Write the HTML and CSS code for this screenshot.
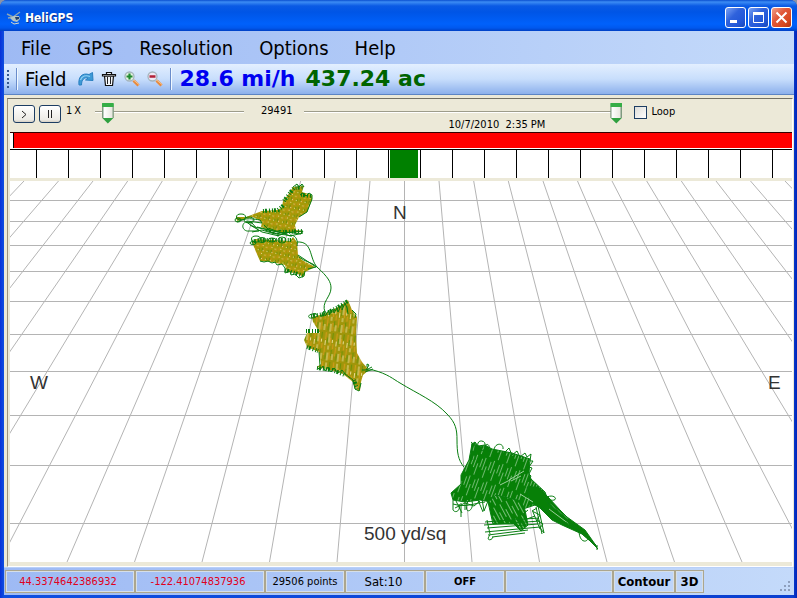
FILE: index.html
```html
<!DOCTYPE html>
<html lang="en">
<head>
<meta charset="utf-8">
<meta name="viewport" content="width=device-width, initial-scale=1">
<title>HeliGPS</title>
<link rel="stylesheet" href="styles.css">
</head>
<body>
<div class="window">
  <header class="titlebar">
    <svg class="app-icon" width="16" height="16" viewBox="0 0 16 16" aria-hidden="true">
      <path d="M1 4l6 3 7-5M2 8l5-1" stroke="#8aa4b4" stroke-width="1.4" fill="none"/>
      <path d="M4 8l4-2 5 0 1 3-3 3-4-1z" fill="#b4c4c4"/>
      <path d="M9 7l4 0 0 2-3 1z" fill="#23406c"/>
      <path d="M5 12l3 2 5-1" stroke="#d8d8c8" fill="none"/>
    </svg>
    <h1>HeliGPS</h1>
    <div class="caption-buttons">
      <button type="button" class="caption" aria-label="Minimize"><svg width="19" height="19" viewBox="0 0 19 19"><path d="M4 12h7v3H4z" fill="#fff"/></svg></button>
      <button type="button" class="caption" aria-label="Maximize"><svg width="19" height="19" viewBox="0 0 19 19"><path d="M4.500 4.500h10v10h-10z" fill="none" stroke="#fff"/><path d="M4 4h11v3H4z" fill="#fff"/></svg></button>
      <button type="button" class="caption close" aria-label="Close"><svg width="19" height="19" viewBox="0 0 19 19"><path d="M4.500 4.500l10 10M14.500 4.500l-10 10" stroke="#fff" stroke-width="2"/></svg></button>
    </div>
  </header>

  <div class="client">
    <nav class="menu">
      <button type="button">File</button>
      <button type="button">GPS</button>
      <button type="button">Resolution</button>
      <button type="button">Options</button>
      <button type="button">Help</button>
    </nav>

    <div class="toolbar">
      <span class="grip"></span>
      <span class="separator"></span>
      <button type="button" class="field">Field</button>
      <div class="tools">
        <button type="button" aria-label="Redo"><svg width="16" height="16" viewBox="0 0 16 16"><path d="M1 14C0 6 4 1.500 11 3.500L14.500 1.500 15 9.500 7.500 9 10 7C6.500 6 3.500 8.500 3.500 14z" fill="#3d9ad6" stroke="#2a7fc0"/><path d="M2.500 9C4 5 8 4 12 5.500" stroke="#8fd0f4" fill="none" stroke-width="1.300"/></svg></button>
        <button type="button" aria-label="Delete"><svg width="16" height="16" viewBox="0 0 16 16"><path d="M3.500 5h9l-1 9.500h-7z" fill="#f4f6fa" stroke="#111" stroke-width="1.200"/><path d="M1.500 3.500h13v1.500h-13zM5.500 3V1.500h5V3" stroke="#111" stroke-width="1.200" fill="#f4f6fa"/><path d="M6.500 6v7M9.500 6v7" stroke="#222"/></svg></button>
        <button type="button" aria-label="Zoom in"><svg width="16" height="16" viewBox="0 0 16 16"><path d="M9.500 9.500l5 5" stroke="#e88a3c" stroke-width="3"/><path d="M9 8.500l6 5" stroke="#f7c490"/><circle cx="5.500" cy="5.500" r="4.500" fill="#e4f2e4" stroke="#a4b4bc" stroke-width="1.300"/><path d="M5.500 2.500v6M2.500 5.500h6" stroke="#208a30" stroke-width="2.200"/></svg></button>
        <button type="button" aria-label="Zoom out"><svg width="16" height="16" viewBox="0 0 16 16"><path d="M9.500 9.500l5 5" stroke="#e88a3c" stroke-width="3"/><path d="M9 8.500l6 5" stroke="#f7c490"/><circle cx="5.500" cy="5.500" r="4.500" fill="#eee8f4" stroke="#a4b4bc" stroke-width="1.300"/><path d="M2.500 5.500h6" stroke="#b02038" stroke-width="2.400"/></svg></button>
      </div>
      <span class="separator"></span>
      <output class="reading speed">28.6 mi/h</output>
      <output class="reading area">437.24 ac</output>
    </div>

    <main class="panel">
      <div class="player">
        <button type="button" class="play" aria-label="Play"><svg width="20" height="16" viewBox="0 0 20 16"><path d="M8 5l4 3.500-4 3.500" fill="none" stroke="#222"/></svg></button>
        <button type="button" class="play" aria-label="Pause"><svg width="20" height="16" viewBox="0 0 20 16"><path d="M8.500 4v8M11.500 4v8" stroke="#222"/></svg></button>
        <label class="rate" for="rate">1&#8201;X</label>
        <input class="slider rate-slider" id="rate" type="range" min="0" max="20" value="1">
        <label class="count" for="position">29491</label>
        <div class="timeline">
          <input class="slider" id="position" type="range" min="0" max="29506" value="29491">
          <output class="stamp">10/7/2010&nbsp; 2:35 PM</output>
        </div>
        <label class="loop"><input type="checkbox">Loop</label>
      </div>

      <div class="redbar"><span class="marker"></span></div>

      <div class="lightbar">
        <span class="first"></span><span></span><span></span><span></span><span></span><span></span><span></span><span></span><span></span><span></span><span></span><span></span><span class="on"></span><span></span><span></span><span></span><span></span><span></span><span></span><span></span><span></span><span></span><span></span><span></span><span class="last"></span>
      </div>

      <svg class="map" viewBox="10 181 782 381" preserveAspectRatio="xMidYMid slice" role="img" aria-label="Flight track">
        <defs>
          <pattern id="crop" width="9" height="8" patternUnits="userSpaceOnUse" patternTransform="rotate(12)">
            <path d="M0 0h9v8H0z" fill="#a39a08"/>
            <path d="M1 0v3M4 4v4M7 1v3" stroke="#c49210" stroke-width="1.300"/>
            <path d="M2.500 4v3M8.500 5v2" stroke="#739008" stroke-width="1.200"/>
            <path d="M2 1h1v1H2zM5.500 2h1v1h-1zM3 6h1v1H3zM7 6h1v1H7z" fill="#eadb8c"/>
          </pattern>
          <pattern id="rows" width="11" height="29" patternUnits="userSpaceOnUse" patternTransform="rotate(7)">
            <path d="M0 0h11v29H0z" fill="#a0960a"/>
            <path d="M1.500 0v7M6.500 5v8M1.500 14v9M7 19v8M9.500 11v5" stroke="#cf9a18" stroke-width="1.300"/>
            <path d="M3.500 5v6M8.500 0v6M3 20v7M8.500 17v6" stroke="#6f9208" stroke-width="1.200"/>
            <path d="M5 1v9M5 13v4M8.500 7v3M1.500 8v5M5 20v8M10 21v6" stroke="#f0e2a0" stroke-width=".9"/>
          </pattern>
          <pattern id="passes" width="9" height="22" patternUnits="userSpaceOnUse" patternTransform="rotate(20)">
            <path d="M0 0h9v22H0z" fill="#078007"/>
            <path d="M1.500 0v13M4.500 8v12M7.500 2v9" stroke="#9bd09b" stroke-width=".7"/>
          </pattern>
          <pattern id="cross" width="7" height="20" patternUnits="userSpaceOnUse" patternTransform="rotate(-28)">
            <path d="M0 0h7v20H0z" fill="#078007"/>
            <path d="M1.500 0v14M4.500 7v12" stroke="#a8d8a8" stroke-width=".7"/>
          </pattern>
        </defs>

        <g class="grid">
          <path d="M10 200.500H792M10 221.500H792M10 245.500H792M10 271.500H792M10 301.500H792M10 334.500H792M10 371.500H792M10 415.500H792M10 465.500H792M10 523.500H792"/>
          <path d="M404.500 181V562M439 181L472 562M473.700 181L539.500 562M508.300 181L607 562M543 181L674.500 562M577.500 181L742 562M612 181L809.500 562M646.700 181L877 562M681.300 181L944.500 562M716 181L1012 562M750.500 181L1079.500 562M785 181L1147 562"/>
          <path d="M370 181L337 562M335.300 181L269.500 562M300.700 181L202 562M266 181L134.500 562M231.500 181L67 562M197 181L-.5 562M162.300 181L-68 562M127.700 181L-135.500 562M93 181L-203 562M58.500 181L-270.500 562M24 181L-338 562"/>
        </g>

        <g class="track">
          <path fill="url(#crop)" stroke="none" d="M293 187L304 186 302 192 312 195 312 200 307 212 299 217 295 225 296 230 303 231 303 232 285 233 272 231 261 227 262 222 253 217 237 221 236 217 246 217 262 211 278 210 282 207 283 201 288 195z"/>
          <path class="teeth" d="M284 201L289 194 294 188 304 187M301 195L312 196M263 211L278 210 284 205M283 232L303 231"/>
          <path d="M293 187L297 184 299 187 302 184 304 187M300 195l3-2 3 3 3-3 3 2v4L307 212 299 217"/>
          <ellipse cx="241" cy="217" rx="4.500" ry="3"/><ellipse cx="238" cy="220" rx="3" ry="2"/><ellipse cx="249" cy="220" rx="5" ry="3"/>
          <path d="M237 222C246 217 254 219 260 220L262 223 247 221C239 225 244 232 249 231L259 231 252 223 247 222C252 228 261 228 268 230L283 233 303 231 301 234 286 232 275 234 262 230 252 232M257 227L278 232M250 225L262 232 279 236M268 228L290 236 303 233M264 225l8 8 9-3-4 6 9-3M265 230l12 4 10 1 5 1"/>

          <path fill="url(#crop)" stroke="none" d="M252 242L255 239 290 241 293 237 297 242 298 255 302 260 315 267 305 272 304 277 295 273 287 272 285 265 272 262 260 261 256 252z"/>
          <path class="teeth" d="M252 242L260 240 291 240M285 270L304 276"/>
          <ellipse cx="256" cy="239" rx="4.500" ry="3"/><ellipse cx="253" cy="243" rx="3" ry="1.500"/><ellipse cx="262" cy="240" rx="4" ry="2.500"/><ellipse cx="272" cy="240" rx="4" ry="2"/><ellipse cx="282" cy="240" rx="4" ry="3"/>
          <path d="M260 261l4 1 4-1 4 2 3-1 2 3 5-1 3 4 0 5 5-2 1 4 4-1 4 4 5-2 1-5M290 235C297 235 298 242 297 246M298 255l9 6 9 6-8 2M297 242C313 241 309 258 317 267M299 257C305 262 312 262 317 267C328 277 331 282 331 288C331 297 321 302 325 312"/>

          <path fill="url(#rows)" stroke="none" d="M312 317L324 314 340 306 348 300 352 310 357 317 356 337 357 353 362 362 369 370 363 375 361 382 360 391 355 389 353 382 343 374 330 370 317 367 321 364 319 352 307 347 304 340 307 333 320 333 313 322z"/>
          <path class="teeth" d="M311 316L325 314 340 306 348 301M306 331L320 331M307 347L318 351M317 368L332 370 345 375M354 380L357 389"/>
          <path d="M316 314C307 313 307 319 312 318C319 318 318 312 313 314M321 317l3-6 1 5 4-6 0 5 4-6 1 4 3-5 1 4 4-8 0 6 3-7 2 5 1 6M352 310l4 4-1 4M319 352l1 14M317 367l3 3 3-4 2 5 3-4 3 5 3-4 4 5 4-3 3 4 8 6 2 9 4 2 2-8M367 367l0-3 2 1-3 5 6-3M365 372l8-3"/>
          <path d="M362 370L373 370C388 374 393 379 400 383C418 394 435 401 447 414C456 423 457 430 457 440C457 452 458 460 464 467"/>

          <path fill="url(#passes)" d="M472 444L475 442 478 446 485 445 492 449 512 453 530 459 529 474 531 479 545 492 548 500 535 505 523 509 507 501 491 502 480 500 465 502 453 500 451 493 461 484 461 475 469 460z"/>
          <path fill="url(#cross)" d="M488 502L496 495 521 501 525 510 528 525 521 531 514 524 493 524z"/>
          <path fill="#078007" d="M527 487L538 487 549 498 560 510 567 517 585 530 597 547 582 534 562 525 552 520 540 508 530 502z"/>
          <path class="gap" d="M509 480L524 471M511 481l10-5M550 504l18 15M549 509l20 15M520 494l13 8M500 485l10-5"/>
          <path d="M472 460V443M475 460V442M471 442l7 6M478 447C476 439 485 440 485 444C487 454 477 451 478 445M484 448C487 440 492 447 488 453M494 450C495 442 504 443 503 449M504 453l5-5 3 7 5-4 3 6 5-4 2 4 4-3-1 7 3 0-4 6 3 1-3 6 2 2-3 6"/>
          <path d="M485 522L539 518M484 525L540 521M487 528L538 524M485 532L540 527M488 535L528 530M492 537L525 533M487 520L490 534M490 535C485 541 492 541 493 537M536 507L542 534M538 506L544 533M533 512L540 529M537 508l-5 3 8 4-3 5 6 4-3 4 4 5"/>
          <path d="M453 500V510C456 514 461 510 459 504M461 503V517M456 501L462 513M465 502V510M468 501C462 516 475 512 472 501M478 500l5 12M482 499l2 12 4-10M453 504C466 508 475 503 485 502M455 508l10-5 9 3 6-5M528 510l-6 5 5 4 8-3"/>
          <path d="M545 498C555 492 560 502 550 500M547 503L596 546M543 506L556 521 574 528M545 500L569 520 598 549M540 507L553 517 574 526 596 545M579 532C580 544 588 542 588 538M597 545v5"/>
        </g>

        <g class="labels">
          <text x="393" y="219">N</text>
          <text x="30" y="389">W</text>
          <text x="768" y="389">E</text>
          <text x="364" y="540">500 yd/sq</text>
        </g>
      </svg>
    </main>

    <footer class="status">
      <span class="cell coordinate">44.3374642386932</span>
      <span class="cell coordinate">-122.41074837936</span>
      <span class="cell points">29506 points</span>
      <span class="cell satellites">Sat:10</span>
      <span class="cell state">OFF</span>
      <span class="cell blank"></span>
      <button type="button" class="cell contour">Contour</button>
      <button type="button" class="cell view">3D</button>
      <svg class="resize" width="12" height="12" viewBox="0 0 12 12" aria-hidden="true"><path d="M8 0h2v2H8zM4 4h2v2H4zM8 4h2v2H8zM0 8h2v2H0zM4 8h2v2H4zM8 8h2v2H8z" fill="#8e9fbd"/></svg>
    </footer>
  </div>
</div>
</body>
</html>
```

FILE: styles.css
```css
* { box-sizing: border-box; }

body {
  margin: 0;
  background: #8a93a8;
  font: 11px/14px "DejaVu Sans Condensed", "DejaVu Sans", sans-serif;
  color: #000;
}

button {
  margin: 0;
  padding: 0;
  border: 0;
  background: none;
  font: inherit;
  color: inherit;
}

.window {
  display: flex;
  flex-direction: column;
  height: 100vh;
  padding: 0 3px 3px 4px;
  border-radius: 7px 7px 0 0;
  background: linear-gradient(90deg, #0831d9, #0f4fe0 4px, #0a3fd0 calc(100% - 4px), #0024b8);
  overflow: hidden;
}

.titlebar {
  display: flex;
  align-items: center;
  height: 31px;
  flex: none;
  margin: 0 -3px 0 -4px;
  padding: 4px 5px 0 6px;
  background: linear-gradient(#0a4fd0, #3c8cf4 2px, #0a5ae4 6px, #0055e6 12px, #0061fb 24px, #0058ee 28px, #0040c4);
  color: #fff;
}

.titlebar h1 {
  margin: 0 0 0 3px;
  font-size: 12px;
  line-height: 16px;
  font-weight: bold;
  text-shadow: 1px 1px #0a2f8c;
}

.caption-buttons {
  display: flex;
  gap: 2px;
  margin-left: auto;
}

.caption {
  width: 21px;
  height: 21px;
  border: 1px solid #fff;
  border-radius: 3px;
  background: linear-gradient(135deg, #7ba2f4, #2f62dc 40%, #2257d8 75%, #1848b8);
}

.caption svg, .tools svg, .play svg { display: block; }

.close { background: linear-gradient(135deg, #f0a08a, #e0583a 40%, #d8481f 75%, #b03410); }

.client {
  display: flex;
  flex-direction: column;
  flex: 1;
  min-height: 0;
  background: #ece9d8;
}

.menu {
  display: flex;
  gap: 26px;
  height: 33px;
  flex: none;
  padding: 2px 17px;
  background: linear-gradient(90deg, #9ebaf4, #c4dafa);
  font-size: 20px;
  line-height: 30px;
}

.toolbar {
  display: flex;
  align-items: center;
  height: 31px;
  flex: none;
  padding: 0 3px;
  border-bottom: 1px solid #5c84c4;
  background: linear-gradient(#e3efff, #c8defc 50%, #8cb0ec);
}

.grip {
  width: 2px;
  height: 19px;
  background: repeating-linear-gradient(#34588f 0 2px, transparent 2px 4px);
}

.separator {
  width: 2px;
  height: 22px;
  margin: 0 7px;
  border-left: 1px solid #6a8ccb;
  border-right: 1px solid #f1f9ff;
}

.field {
  font-size: 20px;
  line-height: 28px;
}

.tools {
  display: flex;
  gap: 7px;
  margin-left: 12px;
}

.reading {
  font: bold 22px/30px "DejaVu Sans", sans-serif;
}

.speed { color: #0000f0; }
.area { margin-left: 10px; color: #006400; }

.panel {
  display: flex;
  flex-direction: column;
  flex: 1;
  min-height: 0;
  margin: 3px 1px 0 3px;
  padding: 0 0 4px 2px;
  border-top: 1px solid #716f64;
  border-left: 1px solid #9c917a;
  border-bottom: 1px solid #fff;
  border-right: 1px solid #fff;
}

.player {
  display: flex;
  align-items: flex-start;
  height: 33px;
  flex: none;
  padding: 3px 3px 0;
}

.play {
  width: 22px;
  height: 18px;
  margin: 3px 4px 0 0;
  border: 1px solid #1c3d63;
  border-radius: 3px;
  background: linear-gradient(#fff, #ecebe5 85%, #d6d0c5);
}

.rate {
  width: 30px;
  margin-top: 2px;
  padding-left: 1px;
}

.slider {
  display: block;
  appearance: none;
  height: 22px;
  margin: 0;
  background: linear-gradient(#9d9c8b, #9d9c8b) 0 9px / 100% 1px no-repeat, linear-gradient(#fff, #fff) 0 10px / 100% 1px no-repeat;
}

.slider::-webkit-slider-thumb {
  appearance: none;
  width: 12px;
  height: 21px;
  border: 0;
  background:
    linear-gradient(#35ad46, #35ad46) 0 0 / 100% 4px no-repeat,
    linear-gradient(90deg, #7f9a80 1px, #fff 2px, #e8e8e0 10px, #7f9a80 11px) 0 4px / 100% 11px no-repeat,
    linear-gradient(#2fa040, #2fa040) 0 15px / 100% 6px no-repeat;
  clip-path: polygon(1px 0, 11px 0, 100% 1px, 100% 15px, 50% 100%, 0 15px, 0 1px);
}

.rate-slider { width: 149px; }

.count {
  margin: 2px 12px 0 17px;
}

.timeline {
  flex: 0 1 318px;
}

.timeline .slider { width: 100%; }

.stamp {
  display: block;
  margin-top: -5px;
  padding-left: 144px;
  line-height: 12px;
  white-space: nowrap;
}

.loop {
  display: flex;
  align-items: center;
  gap: 4px;
  margin: 3px 0 0 12px;
}

.loop input {
  appearance: none;
  width: 13px;
  height: 13px;
  margin: 0;
  border: 1px solid #1c3d63;
  background: linear-gradient(135deg, #dcdcd7, #fff);
}

.redbar {
  height: 17px;
  flex: none;
  border-top: 1px solid #300;
  border-bottom: 1px solid #fff;
  background: #f00;
}

.marker {
  display: block;
  width: 4px;
  height: 100%;
  border-right: 1px solid #000;
  background: #fff;
}

.lightbar {
  display: flex;
  height: 32px;
  flex: none;
  border-top: 1px solid #000;
  border-bottom: 3px solid #ece9d8;
  background: #fff;
}

.lightbar span {
  width: 32px;
  flex: none;
  border-left: 1px solid #000;
}

.lightbar .first { width: 26px; border-left: 0; }
.lightbar .last { width: auto; flex: 1; }

.lightbar .on {
  padding: 0 2px 0 1px;
  background: #008000 content-box;
}

.map {
  display: block;
  width: 100%;
  flex: 1;
  min-height: 0;
  background: #fff;
}

.grid path {
  fill: none;
  stroke: #b4b4b4;
}

.track {
  fill: none;
  stroke: #087d10;
}

.track .teeth {
  stroke-width: 4;
  stroke-dasharray: 1 1 2 2 1 2;
}

.track .gap {
  stroke: #9ccf9c;
}

.labels text {
  font: 19px "Liberation Sans", Arial, sans-serif;
  fill: #333;
}

.status {
  display: flex;
  align-items: flex-start;
  height: 28px;
  flex: none;
  padding: 2px 0 3px 1px;
  border-top: 1px solid #b8d0f8;
  background: linear-gradient(90deg, #9ebaf4, #c4dafa);
}

.cell {
  width: 80px;
  height: 23px;
  flex: none;
  border: 1px solid #aca68e;
  box-shadow: inset 1px 1px #d6dfe8, inset -1px -1px #d6dfe8;
  line-height: 22px;
  text-align: center;
  white-space: nowrap;
}

.coordinate {
  width: 130px;
  padding-right: 4px;
  color: #e00020;
}

.satellites { font-size: 13px; padding-right: 3px; }
.state { font-weight: bold; }
.blank { width: 108px; }

.contour, .view {
  font-size: 13px;
  font-weight: bold;
}

.contour { width: 62px; }
.view { width: 29px; }

.resize {
  margin: 11px 2px 0 auto;
}
```
